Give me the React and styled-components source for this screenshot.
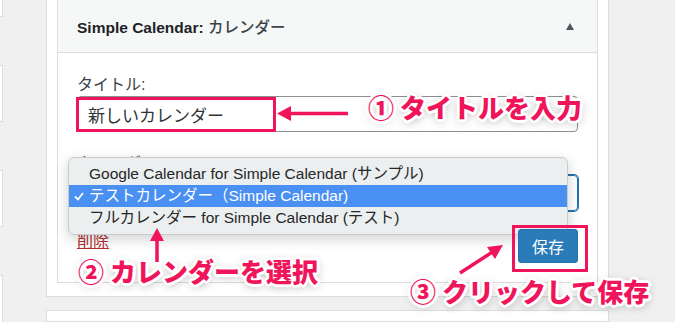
import styled, { createGlobalStyle } from "styled-components";

const GlobalStyle = createGlobalStyle`
  body {
    margin: 0;
    background: #f0f0f1;
    font-family: "Liberation Sans", "Noto Sans CJK JP", sans-serif;
    color: #3c434a;
  }
`;

const Page = styled.div`
  position: relative;
  display: flex;
  width: 675px;
  height: 322px;
  overflow: hidden;
`;

const LeftRail = styled.div`
  display: flex;
  flex-direction: column;
  gap: 48px;
  width: 3px;
  margin-top: -40px;
`;

const RailStub = styled.div`
  flex: none;
  height: 55px;
  background: #fff;
  border: 1px solid #dcdcde;
  border-left: none;
`;

const MainCol = styled.div`
  display: flex;
  flex-direction: column;
  gap: 13px;
  width: 563px;
  margin-left: 43px;
`;

const Panel = styled.div`
  background: #fff;
  border: 1px solid #dcdcde;
  border-top: none;
  padding: 0 10px 13px;
`;

const NextPanel = styled.div`
  height: 40px;
  background: #fff;
  border: 1px solid #dcdcde;
`;

const Widget = styled.div`
  border: 1px solid #dcdcde;
  border-top: none;
  background: #fff;
`;

const WidgetHeader = styled.div`
  display: flex;
  align-items: center;
  justify-content: space-between;
  height: 52px;
  padding: 0 23px 0 19px;
  background: #f6f7f7;
  border-bottom: 1px solid #dcdcde;
`;

const WidgetTitle = styled.h3`
  margin: 0;
  font-size: 15.5px;
  font-weight: 700;
  color: #1d2327;
  span {
    font-weight: 500;
    color: #3c434a;
  }
`;

const Caret = styled.span`
  width: 0;
  height: 0;
  border-left: 4.5px solid transparent;
  border-right: 4.5px solid transparent;
  border-bottom: 7px solid #50575e;
`;

const WidgetBody = styled.div`
  padding: 22px 19px 19px;
`;

const Field = styled.div`
  margin-top: ${(p) => p.$gap || 0}px;
`;

const Label = styled.label`
  display: block;
  font-size: 16px;
  line-height: 20px;
  margin-bottom: 1px;
  color: #3c434a;
`;

const InputWrap = styled.div`
  position: relative;
`;

const TextInput = styled.div`
  box-sizing: border-box;
  height: 36px;
  padding: 0 10px;
  display: flex;
  align-items: center;
  border: 1px solid #8c8f94;
  border-radius: 4px;
  font-size: 17px;
  color: #2c3338;
`;

const SelectBox = styled(TextInput)`
  border-color: #2271b1;
  box-shadow: 0 0 0 1px #2271b1;
`;

const Highlight = styled.div`
  position: absolute;
  left: ${(p) => p.$left}px;
  top: ${(p) => p.$top}px;
  width: ${(p) => p.$w}px;
  height: ${(p) => p.$h}px;
  box-sizing: border-box;
  border: 3px solid #f0145a;
  pointer-events: none;
`;

const Menu = styled.ul`
  position: absolute;
  left: -9px;
  top: -18px;
  width: 500px;
  box-sizing: border-box;
  margin: 0;
  padding: 5px 0;
  list-style: none;
  background: #eceff0;
  border: 1px solid #c9cccf;
  border-radius: 6px;
  box-shadow: 0 4px 14px rgba(0, 0, 0, 0.18);
`;

const MenuItem = styled.li`
  position: relative;
  height: 22px;
  line-height: 22px;
  padding-left: 20px;
  font-size: 15.5px;
  white-space: nowrap;
  color: ${(p) => (p.$active ? "#fff" : "#262626")};
  background: ${(p) => (p.$active ? "#4a8ff2" : "transparent")};
  svg {
    position: absolute;
    left: 5px;
    top: 7px;
  }
`;

const ActionRow = styled.div`
  display: flex;
  justify-content: space-between;
  align-items: flex-start;
  margin-top: 18px;
`;

const DeleteLink = styled.a`
  margin-top: 3px;
  font-size: 16px;
  line-height: 20px;
  color: #b32d2e;
  text-decoration: underline;
`;

const ButtonWrap = styled.div`
  position: relative;
`;

const SaveButton = styled.button`
  width: 60px;
  height: 34px;
  padding: 0;
  border: 1px solid #2271b1;
  border-radius: 3px;
  background: #2a7bb8;
  color: #fff;
  font-family: inherit;
  font-size: 16px;
`;

const Arrows = styled.svg`
  position: absolute;
  left: 0;
  top: 0;
  pointer-events: none;
`;

const Note = styled.div`
  position: absolute;
  left: ${(p) => p.$x}px;
  top: ${(p) => p.$y}px;
  font-family: "Noto Sans CJK JP", sans-serif;
  font-weight: 900;
  font-size: 26px;
  line-height: 26px;
  white-space: nowrap;
  color: #f0145a;
  text-shadow: 3px 0 0 #fff, -3px 0 0 #fff, 0 3px 0 #fff, 0 -3px 0 #fff,
    2px 2px 0 #fff, -2px 2px 0 #fff, 2px -2px 0 #fff, -2px -2px 0 #fff,
    0 2px 10px rgba(0, 0, 0, 0.45);
`;

const PINK = "#f0145a";

const App = () => {
  return (
    <>
      <GlobalStyle />
      <Page>
        <LeftRail>
          <RailStub />
          <RailStub />
          <RailStub />
          <RailStub />
        </LeftRail>
        <MainCol>
          <Panel>
            <Widget>
              <WidgetHeader>
                <WidgetTitle>
                  Simple Calendar: <span>カレンダー</span>
                </WidgetTitle>
                <Caret />
              </WidgetHeader>
              <WidgetBody>
                <Field>
                  <Label>タイトル:</Label>
                  <InputWrap>
                    <TextInput>新しいカレンダー</TextInput>
                    <Highlight $left={-1} $top={1} $w={200} $h={35} />
                  </InputWrap>
                </Field>
                <Field $gap={22}>
                  <Label>カレンダー:</Label>
                  <InputWrap>
                    <SelectBox />
                    <Menu>
                      <MenuItem>Google Calendar for Simple Calendar (サンプル)</MenuItem>
                      <MenuItem $active>
                        <svg width="10" height="9" viewBox="0 0 10 9">
                          <polyline
                            points="1,4.5 4,7.5 9,1"
                            fill="none"
                            stroke="#fff"
                            strokeWidth="1.8"
                          />
                        </svg>
                        テストカレンダー（Simple Calendar)
                      </MenuItem>
                      <MenuItem>フルカレンダー for Simple Calendar (テスト)</MenuItem>
                    </Menu>
                  </InputWrap>
                </Field>
                <ActionRow>
                  <DeleteLink>削除</DeleteLink>
                  <ButtonWrap>
                    <SaveButton>保存</SaveButton>
                    <Highlight $left={-6} $top={-4} $w={76} $h={47} />
                  </ButtonWrap>
                </ActionRow>
              </WidgetBody>
            </Widget>
          </Panel>
          <NextPanel />
        </MainCol>

        <Arrows width="675" height="322" viewBox="0 0 675 322">
          <line x1="348" y1="113.5" x2="288" y2="113.5" stroke={PINK} strokeWidth="3.5" />
          <polygon points="277,113.5 291,106 291,121" fill={PINK} />
          <line x1="157" y1="262" x2="157" y2="238" stroke={PINK} strokeWidth="3.5" />
          <polygon points="157,228 150,241 164,241" fill={PINK} />
          <line x1="460" y1="273" x2="494" y2="251" stroke={PINK} strokeWidth="3.5" />
          <polygon points="503,245 487,247 495,259" fill={PINK} />
        </Arrows>
        <Note $x={368} $y={94}>① タイトルを入力</Note>
        <Note $x={78} $y={258}>② カレンダーを選択</Note>
        <Note $x={410} $y={278}>③ クリックして保存</Note>
      </Page>
    </>
  );
};

export default App;
